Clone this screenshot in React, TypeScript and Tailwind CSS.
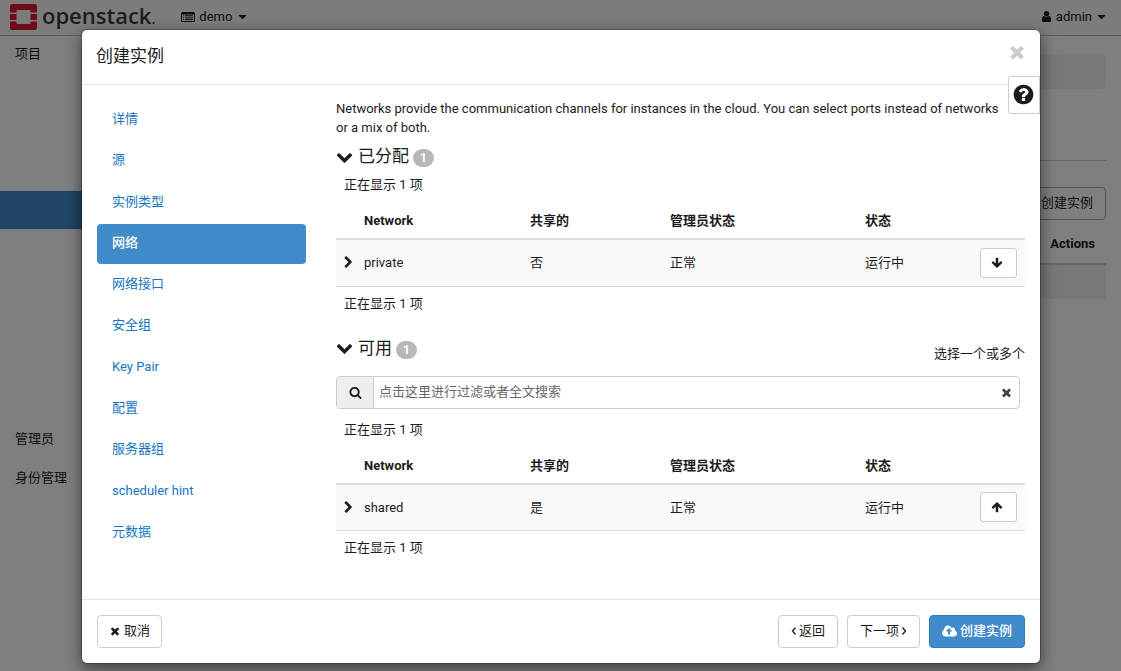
import React, { useState } from "react";
import { FaCaretDown } from "react-icons/fa";

const icons = {
  times:
    "M1490 1322q0 40-28 68l-136 136q-28 28-68 28t-68-28l-294-294-294 294q-28 28-68 28t-68-28l-136-136q-28-28-28-68t28-68l294-294-294-294q-28-28-28-68t28-68l136-136q28-28 68-28t68 28l294 294 294-294q28-28 68-28t68 28l136 136q28 28 28 68t-28 68l-294 294 294 294q28 28 28 68z",
  chevronDown:
    "M1683 808l-742 741q-19 19-45 19t-45-19l-742-741q-19-19-19-45.5t19-45.5l166-165q19-19 45-19t45 19l531 531 531-531q19-19 45-19t45 19l166 165q19 19 19 45.5t-19 45.5z",
  chevronRight:
    "M1363 877l-742 742q-19 19-45 19t-45-19l-166-166q-19-19-19-45t19-45l531-531-531-531q-19-19-19-45t19-45l166-166q19-19 45-19t45 19l742 742q19 19 19 45t-19 45z",
  search:
    "M1216 832q0-185-131.5-316.5t-316.5-131.5-316.5 131.5-131.5 316.5 131.5 316.5 316.5 131.5 316.5-131.5 131.5-316.5zm512 832q0 52-38 90t-90 38q-54 0-90-38l-343-342q-179 124-399 124-143 0-273.5-55.5t-225-150-150-225-55.5-273.5 55.5-273.5 150-225 225-150 273.5-55.5 273.5 55.5 225 150 150 225 55.5 273.5q0 220-124 399l343 343q37 37 37 90z",
  question:
    "M1024 1376v-192q0-14-9-23t-23-9h-192q-14 0-23 9t-9 23v192q0 14 9 23t23 9h192q14 0 23-9t9-23zm256-672q0-88-55.5-163t-138.5-116-170-41q-243 0-371 213-15 24 8 42l132 100q7 6 19 6 16 0 25-12 53-68 86-92 34-24 86-24 48 0 85.5 26t37.5 59q0 38-20 61t-68 45q-63 28-115.5 86.5t-52.5 125.5v36q0 14 9 23t23 9h192q14 0 23-9t9-23q0-19 21.5-49.5t54.5-49.5q32-18 49-28.5t46-35 44.5-48 28-60.5 12.5-81zm384 192q0 209-103 385.5t-279.5 279.5-385.5 103-385.5-103-279.5-279.5-103-385.5 103-385.5 279.5-279.5 385.5-103 385.5 103 279.5 279.5 103 385.5z",
  arrowDown:
    "M1675 832q0 53-37 90l-651 652q-39 37-91 37-53 0-90-37l-651-652q-38-36-38-90 0-53 38-91l74-75q39-37 91-37 53 0 90 37l294 294v-704q0-52 38-90t90-38h128q52 0 90 38t38 90v704l294-294q37-37 90-37 52 0 91 37l75 75q37 39 37 91z",
  user:
    "M1536 1399q0 109-62.5 187t-150.5 78h-854q-88 0-150.5-78t-62.5-187q0-85 8.5-160.5t31.5-152 58.5-131 94-89 134.5-34.5q131 128 313 128t313-128q76 0 134.5 34.5t94 89 58.5 131 31.5 152 8.5 160.5zm-256-887q0 159-112.5 271.5t-271.5 112.5-271.5-112.5-112.5-271.5 112.5-271.5 271.5-112.5 271.5 112.5 112.5 271.5z",
};

const Icon = ({ name, className }: { name: keyof typeof icons; className: string }) => (
  <svg viewBox="0 0 1792 1792" fill="currentColor" className={className} aria-hidden="true">
    <path d={icons[name]} />
  </svg>
);

const Angle = ({ points }: { points: string }) => (
  <svg viewBox="0 0 6 10" className="h-2.5 w-1.5" fill="none" stroke="currentColor" strokeWidth="1.3" aria-hidden="true">
    <polyline points={points} />
  </svg>
);

const ProjectIcon = () => (
  <svg viewBox="0 0 14 12" className="h-3 w-3.5" fill="currentColor" aria-hidden="true">
    <path
      fillRule="evenodd"
      d="M1.500 1h11A1.500 1.500 0 0 1 14 2.500v7a1.500 1.500 0 0 1-1.500 1.500h-11A1.500 1.500 0 0 1 0 9.500v-7A1.500 1.500 0 0 1 1.500 1zM1 3.500v6a.5.5 0 0 0 .5.5h11a.5.5 0 0 0 .5-.5v-6z"
    />
    <path d="M2 4.300h1.200v1H2zM4 4.300h8v1H4zM2 6.200h1.200v1H2zM4 6.200h8v1H4zM2 8.100h1.200v1H2zM4 8.100h8v1H4z" />
  </svg>
);

const CloudUpload = () => (
  <svg viewBox="0 0 1920 1792" fill="currentColor" className="h-3.5 w-[15px]" aria-hidden="true">
    <path d="M1280 928q0-14-9-23l-352-352q-9-9-23-9t-23 9l-351 351q-10 12-10 24 0 14 9 23t23 9h224v352q0 13 9.5 22.5t22.5 9.5h192q13 0 22.5-9.5t9.5-22.5v-352h224q13 0 22.5-9.5t9.5-22.5zm640 288q0 159-112.5 271.5t-271.5 112.5h-1088q-185 0-316.5-131.5t-131.5-316.5q0-130 70-240t188-165q-2-30-2-43 0-212 150-362t362-150q156 0 285.5 87t188.5 231q71-62 166-62 106 0 181 75t75 181q0 76-41 138 130 31 213.5 135.5t83.5 238.5z" />
  </svg>
);

const Logo = () => (
  <a href="#home" className="flex items-center gap-[5px]">
    <svg viewBox="0 0 27 26" className="h-[26px] w-[27px]" aria-hidden="true">
      <path
        fill="#da1a32"
        d="M2 0h23a2 2 0 0 1 2 2v6.500h-6.500V7a1 1 0 0 0-1-1h-12a1 1 0 0 0-1 1v1.500H0V2a2 2 0 0 1 2-2zM0 10h6.500v6H0zM20.500 10H27v6h-6.500zM0 17.500h6.500V19a1 1 0 0 0 1 1h12a1 1 0 0 0 1-1v-1.500H27V24a2 2 0 0 1-2 2H2a2 2 0 0 1-2-2z"
      />
    </svg>
    <span className="pb-0.5 font-['Open_Sans','Noto_Sans',sans-serif] text-[22px] leading-6 font-semibold text-[#3c3a3a]">
      openstack<span className="text-sm">.</span>
    </span>
  </a>
);

const steps = [
  "详情",
  "源",
  "实例类型",
  "网络",
  "网络接口",
  "安全组",
  "Key Pair",
  "配置",
  "服务器组",
  "scheduler hint",
  "元数据",
];

type Network = {
  name: string;
  shared: string;
  adminState: string;
  status: string;
};

const allocated: Network[] = [
  { name: "private", shared: "否", adminState: "正常", status: "运行中" },
];

const available: Network[] = [
  { name: "shared", shared: "是", adminState: "正常", status: "运行中" },
];

const SectionTitle = ({ title, count }: { title: string; count: number }) => (
  <h3 className="flex h-[38px] items-center pt-0.5 text-[17px]">
    <Icon name="chevronDown" className="mr-[5px] mb-0.5 size-[17px]" />
    {title}
    <span className="mt-0.5 ml-1 flex h-[18px] w-[21px] items-center justify-center rounded-full bg-[#b8b8b8] text-xs font-bold text-white">
      {count}
    </span>
  </h3>
);

const NetworkTable = ({
  networks,
  direction,
}: {
  networks: Network[];
  direction: "up" | "down";
}) => (
  <div>
    <p className="px-2 leading-5">正在显示 {networks.length} 项</p>
    <table className="w-full table-fixed border-collapse text-left">
      <thead>
        <tr className="h-11 border-b-2 border-[#ddd] align-bottom leading-[19px]">
          <th className="w-5" aria-label="展开" />
          <th className="w-[166px] px-2 pb-2">Network</th>
          <th className="w-[140px] px-2 pb-2">共享的</th>
          <th className="w-[195px] px-2 pb-2">管理员状态</th>
          <th className="px-2 pb-2">状态</th>
          <th className="w-[53px]" aria-label="操作" />
        </tr>
      </thead>
      <tbody>
        {networks.map((network) => (
          <tr key={network.name} className="h-[47px] border-b border-[#ddd] bg-[#f9f9f9]">
            <td>
              <button type="button" aria-label="展开" className="flex pl-1.5">
                <Icon name="chevronRight" className="size-[13px]" />
              </button>
            </td>
            <td className="px-2">{network.name}</td>
            <td className="px-2">{network.shared}</td>
            <td className="px-2">{network.adminState}</td>
            <td className="px-2">{network.status}</td>
            <td className="px-2">
              <button
                type="button"
                aria-label={direction === "down" ? "移除" : "添加"}
                className="flex h-[30px] w-[37px] items-center justify-center rounded-[3px] border border-[#ccc] bg-white pr-[3px]"
              >
                <Icon
                  name="arrowDown"
                  className={direction === "up" ? "size-3 rotate-180" : "size-3"}
                />
              </button>
            </td>
          </tr>
        ))}
      </tbody>
    </table>
    <p className="px-2 pt-[7px] leading-5">正在显示 {networks.length} 项</p>
  </div>
);

const Dashboard = () => (
  <div className="flex min-h-screen flex-col bg-white">
    <nav className="flex h-9 items-center border-b border-[#bbb] bg-[#f8f8f8] px-2.5 pb-0.5">
      <Logo />
      <button type="button" className="ml-[26px] flex items-center gap-1">
        <ProjectIcon />
        demo
        <FaCaretDown className="size-[13px]" />
      </button>
      <button type="button" className="mr-[3px] ml-auto flex items-center gap-[3px]">
        <Icon name="user" className="size-[13px]" />
        admin
        <FaCaretDown className="size-[13px]" />
      </button>
    </nav>
    <div className="flex flex-1">
      <aside className="w-[220px] shrink-0">
        <a href="#project" className="block px-[15px] pt-2 pb-[127px] leading-5">
          项目
        </a>
        <div className="h-[38px] border-y border-[#357ebd] bg-[#428bca]" />
        <a href="#admin" className="mt-[190px] block px-[15px] py-2.5 leading-5">
          管理员
        </a>
        <a href="#identity" className="block px-[15px] py-[9px] leading-5">
          身份管理
        </a>
      </aside>
      <main className="flex-1 px-[15px] pt-[18px]">
        <div className="h-[35px] rounded bg-[#f0f0f0]" />
        <div className="h-[72px] border-b border-[#ccc]" />
        <div className="flex justify-end pt-[26px]">
          <button type="button" className="h-[33px] rounded border border-[#aaa] px-3 pb-0.5">
            创建实例
          </button>
        </div>
        <table className="w-full">
          <thead>
            <tr className="h-11 border-b-2 border-[#ccc]">
              <th className="px-[11px] pt-1 text-right">Actions</th>
            </tr>
          </thead>
          <tbody>
            <tr className="h-[35px] bg-[#f0f0f0]">
              <td />
            </tr>
          </tbody>
        </table>
      </main>
    </div>
  </div>
);

const App = () => {
  const [step, setStep] = useState("网络");
  const [filter, setFilter] = useState("");

  return (
    <div className="font-[Roboto,'Noto_Sans_CJK_SC',sans-serif] text-[13px] text-[#1c1c1c]">
      <Dashboard />
      <div className="absolute inset-0 bg-black/50 pt-[29px] pr-20 pl-[81px]">
        <div
          role="dialog"
          aria-labelledby="dialog-title"
          className="relative rounded-md border border-black/20 bg-white bg-clip-padding shadow-[0_5px_15px_rgba(0,0,0,0.5)]"
        >
          <header className="flex h-[55px] items-center justify-between border-b border-[#e5e5e5] pr-[13px] pl-3.5">
            <h1 id="dialog-title" className="text-[17px]">
              创建实例
            </h1>
            <button type="button" aria-label="关闭" className="mb-2.5 text-[#ccc]">
              <Icon name="times" className="size-5" />
            </button>
          </header>
          <button
            type="button"
            aria-label="帮助"
            className="absolute top-[46px] right-0 flex h-[38px] w-8 items-center justify-center rounded-l-[3px] border border-[#ccc] bg-white pr-0.5 pb-0.5"
          >
            <Icon name="question" className="size-[23px]" />
          </button>

          <div className="flex gap-[30px] pt-3.5 pr-[15px] pb-[41px] pl-[15px]">
            <ul className="mt-px flex h-[453px] w-[209px] shrink-0 flex-col justify-between">
              {steps.map((name) => (
                <li key={name}>
                  <a
                    href={`#${name}`}
                    onClick={() => setStep(name)}
                    className={
                      name === step
                        ? "block rounded bg-[#428bca] px-[15px] pt-[9px] pb-[11px] leading-5 font-medium text-white"
                        : "block px-[15px] pt-[9px] pb-[11px] leading-5 text-[#1674c0]"
                    }
                  >
                    {name}
                  </a>
                </li>
              ))}
            </ul>

            <section className="min-w-0 flex-1">
              <p className="pr-6 leading-[19px]">
                Networks provide the communication channels for instances in the cloud. You can
                select ports instead of networks or a mix of both.
              </p>
              <SectionTitle title="已分配" count={allocated.length} />
              <NetworkTable networks={allocated} direction="down" />

              <div className="mt-[15px] flex items-center justify-between">
                <SectionTitle title="可用" count={available.length} />
                <span className="pt-3">选择一个或多个</span>
              </div>
              <div className="mt-[9px] mr-[5px] mb-[11px] flex h-[33px] items-center overflow-hidden rounded border border-[#ccc]">
                <span className="flex h-full w-[37px] items-center justify-center border-r border-[#ccc] bg-[#eee]">
                  <Icon name="search" className="size-[13px]" />
                </span>
                <input
                  type="text"
                  aria-label="过滤"
                  value={filter}
                  onChange={(e) => setFilter(e.target.value)}
                  placeholder="点击这里进行过滤或者全文搜索"
                  className="h-full flex-1 px-[5px] pb-0.5 outline-none placeholder:text-[#666]"
                />
                <button
                  type="button"
                  aria-label="清除"
                  onClick={() => setFilter("")}
                  className="px-1.5 text-[#444]"
                >
                  <Icon name="times" className="size-[13px]" />
                </button>
              </div>
              <NetworkTable networks={available} direction="up" />
            </section>
          </div>

          <footer className="flex items-center gap-[9px] border-t border-[#e5e5e5] p-[15px]">
            <button
              type="button"
              className="mr-auto flex h-[33px] items-center gap-[3px] rounded border border-[#ccc] px-[11px] pb-0.5"
            >
              <Icon name="times" className="size-3" />
              取消
            </button>
            <button
              type="button"
              className="flex h-[33px] items-center gap-0.5 rounded border border-[#ccc] px-3 pb-0.5"
            >
              <Angle points="4.5,1.500 1.500,5 4.500,8.500" />
              返回
            </button>
            <button
              type="button"
              className="flex h-[33px] items-center gap-0.5 rounded border border-[#ccc] px-3 pb-0.5"
            >
              下一项
              <Angle points="1.500,1.500 4.500,5 1.500,8.500" />
            </button>
            <button
              type="button"
              className="flex h-[33px] items-center gap-[3px] rounded border border-[#357ebd] bg-[#428bca] px-3 pb-0.5 font-medium text-white"
            >
              <CloudUpload />
              创建实例
            </button>
          </footer>
        </div>
      </div>
    </div>
  );
};

export default App;
